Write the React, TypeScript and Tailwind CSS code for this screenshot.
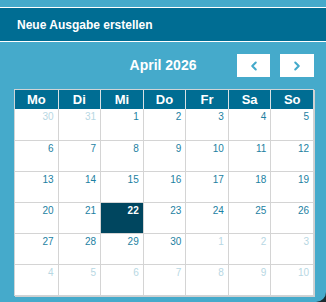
import { ChevronLeft, ChevronRight } from "lucide-react";

const days = ["Mo", "Di", "Mi", "Do", "Fr", "Sa", "So"];

// April 2026 starts on Wednesday
const cells: { d: number; muted: boolean }[] = [
  { d: 30, muted: true },
  { d: 31, muted: true },
  ...Array.from({ length: 30 }, (_, i) => ({ d: i + 1, muted: false })),
  ...Array.from({ length: 10 }, (_, i) => ({ d: i + 1, muted: true })),
];

export default function App() {
  return (
    <div className="w-[326px] h-[302px] bg-[#1d2a30] overflow-hidden" style={{ fontFamily: '"Liberation Sans", Arial, sans-serif' }}>
      <div className="h-full bg-[#45aacb] rounded-br-[10px] overflow-hidden">
        <div className="h-[7px]" />
        <div className="h-px bg-white" />
        <div className="h-[33px] bg-[#006d93] flex items-center pl-[17px] text-white font-bold text-[12px]">
          Neue Ausgabe erstellen
        </div>
        <div className="h-px bg-white" />

        <div className="px-[14px] pr-[12px] pt-[12px]">
          <div className="relative flex items-center justify-end h-[23px] gap-[10px]">
            <div className="absolute left-0 right-0 text-center text-white font-bold text-[14px] -ml-[2px] pointer-events-none">
              April 2026
            </div>
            <button className="w-[33px] h-[23px] bg-white flex items-center justify-center text-[#45aacb]">
              <ChevronLeft size={14} strokeWidth={3.6} />
            </button>
            <button className="w-[34px] h-[23px] bg-white flex items-center justify-center text-[#45aacb]">
              <ChevronRight size={14} strokeWidth={3.6} />
            </button>
          </div>

          <div className="mt-[12px] w-[300px] bg-white border border-[#cfd4d6] shadow-[1px_1px_0_#d0d0d0]">
            <div className="grid grid-cols-7 h-[19px] bg-[#006d93]">
              {days.map((d, i) => (
                <div
                  key={d}
                  className={`flex items-center justify-center text-white font-bold text-[13px] ${i > 0 ? "border-l border-[#d9e1e4]" : ""}`}
                >
                  {d}
                </div>
              ))}
            </div>
            <div className="grid grid-cols-7">
              {cells.map((c, i) => {
                const sel = !c.muted && c.d === 22;
                return (
                  <div
                    key={i}
                    className={`h-[31px] text-right pr-[4px] pt-[2px] text-[10px] leading-[12px] ${i % 7 > 0 ? "border-l border-[#d4d4d4]" : ""} ${i >= 7 ? "border-t border-[#d4d4d4]" : ""} ${sel ? "bg-[#00465f] text-white font-bold" : c.muted ? "text-[#b7d7e3]" : "text-[#1c7fa2]"}`}
                  >
                    {c.d}
                  </div>
                );
              })}
            </div>
          </div>
        </div>
      </div>
    </div>
  );
}
